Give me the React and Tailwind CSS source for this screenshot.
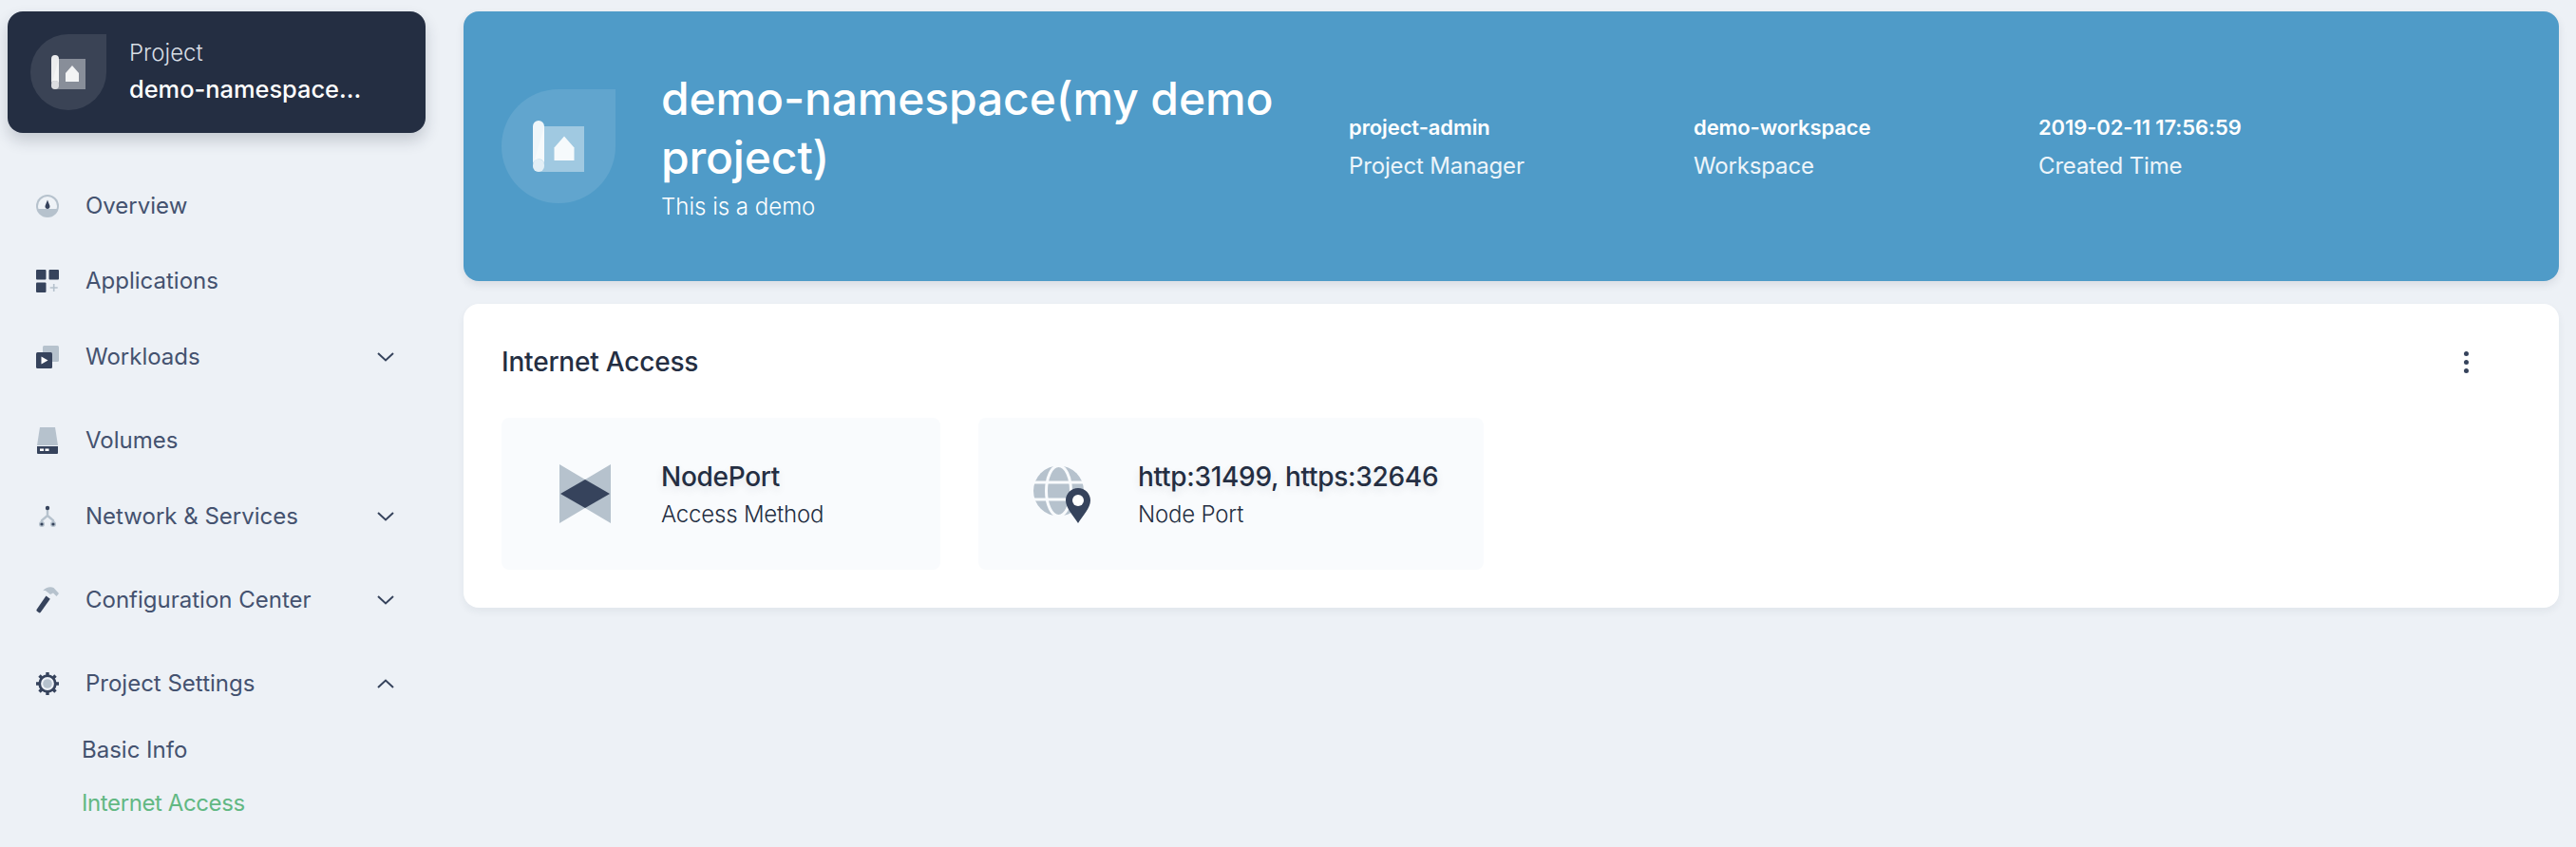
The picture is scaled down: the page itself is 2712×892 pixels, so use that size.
import React from 'react';

const DARK = '#36435c';
const LIGHT = '#b6c2cd';

const ProjectIcon = ({ className }) => (
    <div className={`shrink-0 rounded-[50%_0_50%_50%] bg-white/10 ${className}`}>
        <svg viewBox="0 0 80 80" className="w-full h-full">
            <path d="M30 26h28v32H26a4 4 0 0 1-4-4z" fill="#fff" fillOpacity="0.4" />
            <path d="M22 26a4 4 0 0 1 8 0v26a4 4 0 0 0-4-3 4 4 0 0 0-4 4z" fill="#fff" fillOpacity="0.9" />
            <path d="M22 53a4 4 0 0 1 8 0v1a4 4 0 0 1-4 4 4 4 0 0 1-4-4z" fill="#fff" fillOpacity="0.7" />
            <path d="M44 33l7 8v9H37v-9z" fill="#fff" fillOpacity="0.9" />
        </svg>
    </div>
);

const OverviewIcon = () => (
    <svg viewBox="0 0 24 24" className="w-6 h-6">
        <circle cx="12" cy="12" r="12" fill={LIGHT} />
        <path d="M2 12a10 10 0 0 1 20 0c0 1-.2 2-.5 3h-19A10 10 0 0 1 2 12z" fill="#eff3f7" />
        <path d="M12 5.5l2.4 6.2a2.5 2.5 0 1 1-4.8 0z" fill={DARK} />
    </svg>
);

const AppsIcon = () => (
    <svg viewBox="0 0 24 24" className="w-6 h-6">
        <rect x="0" y="0" width="10.5" height="10.5" rx="1" fill={DARK} />
        <rect x="13.5" y="0" width="10.5" height="10.5" rx="1" fill={DARK} />
        <rect x="0" y="13.5" width="10.5" height="10.5" rx="1" fill={DARK} />
        <path d="M18.7 15v8M14.7 19h8" stroke={LIGHT} strokeWidth="1.6" />
    </svg>
);

const WorkloadsIcon = () => (
    <svg viewBox="0 0 24 24" className="w-6 h-6">
        <rect x="7" y="0" width="17" height="17" rx="1.5" fill={LIGHT} />
        <rect x="0" y="7" width="17" height="17" rx="1.5" fill={DARK} />
        <path d="M5.5 11.5l7 4-7 4z" fill="#fff" />
    </svg>
);

const VolumesIcon = () => (
    <svg viewBox="0 0 24 28" className="w-6 h-7">
        <path d="M4 0h16l3 19H1z" fill={LIGHT} />
        <path d="M1 20h22v7a1 1 0 0 1-1 1H2a1 1 0 0 1-1-1z" fill={DARK} />
        <rect x="4" y="22.5" width="4" height="2.5" fill="#fff" />
        <rect x="9.5" y="22.5" width="4" height="2.5" fill="#fff" />
    </svg>
);

const NetworkIcon = () => (
    <svg viewBox="0 0 24 24" className="w-6 h-6">
        <path d="M12 3v8M12 11l-6 5v3M12 11l6 5v3" stroke={LIGHT} strokeWidth="2.4" fill="none" />
        <circle cx="12" cy="3" r="2.2" fill={DARK} />
        <circle cx="6" cy="20" r="3" fill={LIGHT} />
        <circle cx="18" cy="20" r="3" fill={LIGHT} />
        <circle cx="6" cy="20" r="1.6" fill={DARK} />
        <circle cx="18" cy="20" r="1.6" fill={DARK} />
    </svg>
);

const HammerIcon = () => (
    <svg viewBox="0 0 24 28" className="w-6 h-7">
        <path d="M7 4.5C10 .5 15 -.5 18.5 1L24 7l-2.5 3-3.5-3.5-3 1.5-4.500-3.500C9.500 3.800 8 4 7 4.500z" fill={LIGHT} />
        <path d="M10.500 9.500l4.300 3.300L4.800 26.800a1.500 1.500 0 0 1-2.100.300L1 25.800a1.500 1.500 0 0 1-.300-2z" fill={DARK} />
    </svg>
);

const GearIcon = () => (
    <svg viewBox="0 0 24 24" className="w-6 h-6">
        <circle cx="12" cy="12" r="8.300" fill="none" stroke={DARK} strokeWidth="2.800" />
        <circle cx="12" cy="12" r="4.800" fill={LIGHT} />
        <g stroke={DARK} strokeWidth="3.400">
            <path d="M12 0v4M12 20v4M0 12h4M20 12h4M3.500 3.500l2.800 2.800M17.700 17.700l2.800 2.800M20.500 3.500l-2.800 2.800M6.300 17.700l-2.800 2.800" />
        </g>
    </svg>
);

const Chevron = ({ up }) => (
    <svg viewBox="0 0 18 10" className="w-[18px] h-[10px]">
        <path
            d={up ? 'M1 9l8-7.500L17 9' : 'M1 1l8 7.500L17 1'}
            fill="none"
            stroke={DARK}
            strokeWidth="2"
        />
    </svg>
);

const NodePortIcon = () => (
    <svg viewBox="0 0 54 62" className="w-[54px] h-[62px]">
        <path d="M0 0l27 16L54 0v62L27 46 0 62z" fill={LIGHT} />
        <path d="M1 31l26-15 26 15-26 15z" fill={DARK} />
    </svg>
);

const GlobePinIcon = () => (
    <svg viewBox="0 0 60 61" className="w-[60px] h-[61px]">
        <circle cx="26.500" cy="27" r="26.500" fill={LIGHT} />
        <ellipse cx="26.500" cy="27" rx="13" ry="26.500" fill="none" stroke="#f9fbfd" strokeWidth="3" />
        <path d="M0 18h53M0 36h53" stroke="#f9fbfd" strokeWidth="3" />
        <path d="M47 24c7.200 0 13 5.800 13 13 0 8-8 16-13 24-5-8-13-16-13-24 0-7.200 5.800-13 13-13z" fill={DARK} />
        <circle cx="47" cy="37" r="6" fill="#fff" />
    </svg>
);

const navItems = [
    { label: 'Overview', icon: OverviewIcon, margin: 'mt-[57px]' },
    { label: 'Applications', icon: AppsIcon, margin: 'mt-[39px]' },
    { label: 'Workloads', icon: WorkloadsIcon, margin: 'mt-10', arrow: 'down' },
    { label: 'Volumes', icon: VolumesIcon, margin: 'mt-12' },
    { label: 'Network & Services', icon: NetworkIcon, margin: 'mt-10', arrow: 'down' },
    { label: 'Configuration Center', icon: HammerIcon, margin: 'mt-12', arrow: 'down' },
    { label: 'Project Settings', icon: GearIcon, margin: 'mt-12', arrow: 'up' },
];

const stats = [
    { value: 'project-admin', label: 'Project Manager' },
    { value: 'demo-workspace', label: 'Workspace' },
    { value: '2019-02-11 17:56:59', label: 'Created Time' },
];

const tiles = [
    { title: 'NodePort', label: 'Access Method', icon: NodePortIcon },
    { title: 'http:31499, https:32646', label: 'Node Port', icon: GlobePinIcon },
];

const Sidebar = () => (
    <aside className="w-[488px] shrink-0 pt-3 pl-2">
        <div className="w-[440px] h-[128px] rounded-2xl bg-[#242e42] flex items-center pl-6 shadow-[0_8px_16px_0_rgba(36,46,66,0.2)]">
            <ProjectIcon className="w-20 h-20" />
            <div className="ml-6">
                <p className="text-[24px] leading-[36px] font-light text-[#d8dee5]">Project</p>
                <p className="text-[25.4px] leading-[40px] font-medium text-white">demo-namespace...</p>
            </div>
        </div>

        <nav>
            {navItems.map((item) => {
                const Icon = item.icon;
                return (
                    <div key={item.label} className={`h-10 flex items-center pl-[30px] ${item.margin}`}>
                        <div className="w-6 flex justify-center">
                            <Icon />
                        </div>
                        <span className="ml-7 text-[24px] text-[#44526f]">{item.label}</span>
                        {item.arrow && (
                            <div className="ml-auto mr-[73px] flex items-center">
                                <Chevron up={item.arrow === 'up'} />
                            </div>
                        )}
                    </div>
                );
            })}
            <div className="h-10 mt-[30px] flex items-center pl-[78px] text-[24px] text-[#44526f]">Basic Info</div>
            <div className="h-10 mt-4 flex items-center pl-[78px] text-[24px] tracking-[-0.4px] text-[#62b883]">Internet Access</div>
        </nav>
    </aside>
);

const Banner = () => (
    <div className="h-[284px] rounded-2xl bg-[#4f9bc8] flex items-center pl-10 shadow-[0_4px_8px_0_rgba(36,46,66,0.1)]">
        <ProjectIcon className="w-[120px] h-[120px]" />
        <div className="w-[680px] ml-12 mr-[45px] text-white">
            <h1 className="text-[48px] leading-[62px] font-medium tracking-[-0.15px]">demo-namespace(my demo project)</h1>
            <p className="pt-[3px] text-[24px] leading-[36px] font-light">This is a demo</p>
        </div>
        {stats.map((stat) => (
            <div key={stat.value} className="w-[363px] pt-[5px] -ml-px mr-px text-white">
                <p className="text-[22px] leading-[36px] font-semibold tracking-[-0.1px]">{stat.value}</p>
                <p className="text-[24px] leading-[45px] tracking-[-0.15px] text-white/90">{stat.label}</p>
            </div>
        ))}
    </div>
);

const AccessCard = () => (
    <div className="mt-6 h-[320px] rounded-2xl bg-white px-10 shadow-[0_4px_8px_0_rgba(36,46,66,0.06)]">
        <div className="h-[120px] pt-[2px] flex items-center justify-between">
            <h2 className="text-[28px] font-medium tracking-[-0.2px] text-[#242e42]">Internet Access</h2>
            <div className="mr-[55px] flex flex-col gap-1">
                <span className="w-[5px] h-[5px] rounded-full bg-[#36435c]" />
                <span className="w-[5px] h-[5px] rounded-full bg-[#36435c]" />
                <span className="w-[5px] h-[5px] rounded-full bg-[#36435c]" />
            </div>
        </div>
        <div className="flex gap-10">
            {tiles.map((tile) => {
                const Icon = tile.icon;
                return (
                    <div key={tile.title} className="h-40 min-w-[462px] rounded-lg bg-[#f9fbfd] flex items-center pl-12 pr-12">
                        <div className="w-20 flex justify-center">
                            <Icon />
                        </div>
                        <div className="ml-10 pt-[3px] text-[#242e42]">
                            <p className="text-[28px] leading-[40px] font-medium tracking-[-0.3px] [text-shadow:0_4px_8px_rgba(36,46,66,0.1)]">{tile.title}</p>
                            <p className="text-[24px] leading-[40px] tracking-[-0.2px] font-light">{tile.label}</p>
                        </div>
                    </div>
                );
            })}
        </div>
    </div>
);

const App = () => (
    <div className="w-full h-screen overflow-hidden bg-[#edf1f6] flex font-['Inter','Noto_Sans',sans-serif]">
        <Sidebar />
        <main className="flex-1 pt-3 pr-[18px]">
            <Banner />
            <AccessCard />
        </main>
    </div>
);

export default App;
